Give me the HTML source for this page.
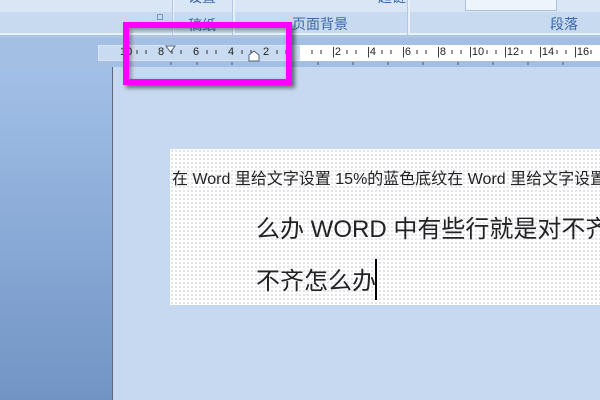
<!DOCTYPE html><html><head><meta charset="utf-8"><style>
*{margin:0;padding:0;box-sizing:border-box}
body{width:600px;height:400px;overflow:hidden;position:relative;background:#c6d9f0;font-family:"Liberation Sans","Noto Sans CJK SC",sans-serif}
.a{position:absolute}
.lbl{color:#3d68a8;font-size:14px;position:absolute;top:15px;line-height:16px}
.num{position:absolute;top:45px;font-size:11px;line-height:15px;color:#222;font-family:"Liberation Sans",sans-serif}
</style></head><body>
<div class="a" style="left:0;top:0;width:600px;height:12px;background:#d9e6f5"></div>
<div class="a" style="left:0;top:12px;width:600px;height:22px;background:#c7daf0"></div>
<div class="a" style="left:0;top:33px;width:600px;height:2px;background:#e6f2fb"></div>
<div class="a" style="left:0;top:35px;width:600px;height:3px;background:#aec5e4"></div>
<div class="a" style="left:172px;top:0;width:2px;height:35px;background:#e8f0fa;border-left:1px solid #b3c8e2"></div>
<div class="a" style="left:232px;top:0;width:3px;height:35px;background:#e8f0fa;border-left:1px solid #b3c8e2"></div>
<div class="a" style="left:407px;top:0;width:3px;height:35px;background:#e8f0fa;border-left:1px solid #b3c8e2"></div>
<div class="a" style="left:465px;top:0;width:92px;height:11px;background:#eef4fb;border:1px solid #a9bfdc;border-top:none"></div>
<div class="a" style="left:157px;top:14px;width:6px;height:6px;border:1px solid #7b93b5"></div>
<div class="lbl" style="left:188px;top:-11px">设置</div>
<div class="lbl" style="left:188px;top:17px">稿纸</div>
<div class="lbl" style="left:378px;top:-11px">超链</div>
<div class="lbl" style="left:292px;top:16px">页面背景</div>
<div class="lbl" style="left:550px;top:16px">段落</div>
<!-- ruler -->
<div class="a" style="left:0;top:38px;width:600px;height:29px;background:#a4bfe4"></div>
<div class="a" style="left:98px;top:45px;width:203px;height:16px;background:#c9dbf1;border:1px solid #d9e5f4"></div>
<div class="a" style="left:300px;top:45px;width:300px;height:16px;background:#fff"></div>
<div class="num" style="left:332px">|2</div><div class="num" style="left:367px">|4</div><div class="num" style="left:402px">|6</div><div class="num" style="left:437px">|8</div><div class="num" style="left:469px">|10</div><div class="num" style="left:504px">|12</div><div class="num" style="left:539px">|14</div><div class="num" style="left:574px">|16</div>
<div class="num" style="left:263px">2</div><div class="num" style="left:228px">4</div><div class="num" style="left:193px">6</div><div class="num" style="left:158px">8</div><div class="num" style="left:120px">10</div>
<svg class="a" style="left:0;top:45px" width="600" height="22">
<g stroke="#333" stroke-width="1">
<path d="M312 5v4M321 5v4M347 5v4M356 5v4M382 5v4M391 5v4M417 5v4M426 5v4M452 5v4M461 5v4M487 5v4M496 5v4M522 5v4M531 5v4M557 5v4M566 5v4M591 5v4M286 5v4M277 5v4M251 5v4M242 5v4M216 5v4M207 5v4M181 5v4M172 5v4M146 5v4M137 5v4"/>
<path d="M318 17v3M353 17v3M388 17v3M423 17v3M458 17v3M493 17v3M528 17v3M563 17v3M232 17v3M197 17v3M171 17v3" stroke="#555"/>
</g>
<path d="M166 1h9l-4.5 6z" fill="#fff" stroke="#50607a"/>
<path d="M249 16v-6l5-4 5 4v6z" fill="#fff" stroke="#50607a"/>
</svg>
<!-- left panel -->
<div class="a" style="left:0;top:67px;width:112px;height:333px;background:linear-gradient(#a2c0e7,#7194c5)"></div>
<div class="a" style="left:112px;top:67px;width:1px;height:333px;background:#5f6b7c"></div>
<!-- text box -->
<div class="a" style="left:170px;top:149px;width:430px;height:156px;background-color:#fff;background-image:radial-gradient(circle,#9aa8bb 0.7px,transparent 0.8px);background-size:4px 4px"></div>
<div class="a" style="left:172px;top:170px;font-size:16px;color:#222;white-space:nowrap;line-height:20px">在 Word 里给文字设置 15%的蓝色底纹在 Word 里给文字设置</div>
<div class="a" style="left:256px;top:215px;font-size:24px;color:#222;white-space:nowrap;line-height:30px">么办 WORD 中有些行就是对不齐</div>
<div class="a" style="left:256px;top:267px;font-size:24px;color:#222;white-space:nowrap;line-height:30px">不齐怎么办</div>
<div class="a" style="left:375px;top:259px;width:2px;height:41px;background:#000"></div>
<!-- magenta box -->
<div class="a" style="left:123px;top:22px;width:169px;height:63px;border:6px solid #ff00ff;box-shadow:3px 3px 4px rgba(0,0,0,.5),inset 2px 2px 4px rgba(0,0,0,.4)"></div>
</body></html>
